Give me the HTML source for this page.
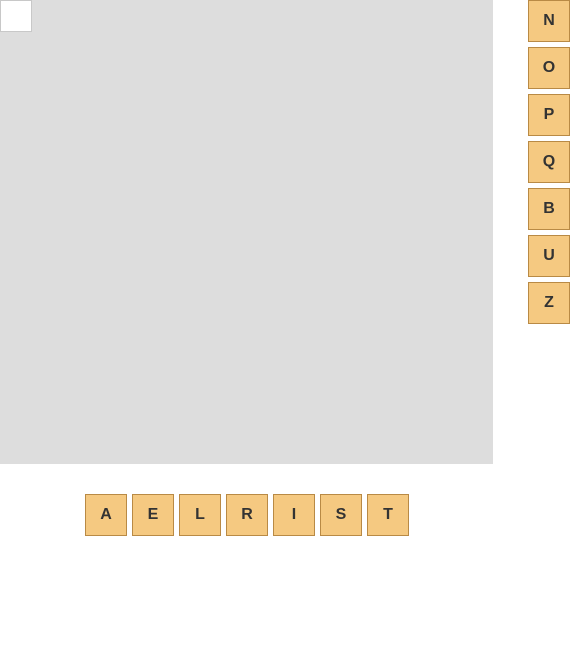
<!DOCTYPE html>
<html><head><style>
body{margin:0;width:584px;height:653px;background:#fff;position:relative;overflow:hidden;font-family:"Liberation Sans",Arial,sans-serif}
#board{position:absolute;left:0;top:0;width:493px;height:464px;background:#dddddd}
#cell{position:absolute;left:0;top:0;width:30px;height:30px;background:#fff;border:1px solid #c8c8c8}
.t{position:absolute;width:40px;height:40px;background:#f5c981;border:1px solid #b98a45;color:#333;font-weight:bold;font-size:16px;line-height:40px;text-align:center}
</style></head><body>
<div id="board"><div id="cell"></div></div>
<div class="t" style="left:528px;top:0">N</div>
<div class="t" style="left:528px;top:47px">O</div>
<div class="t" style="left:528px;top:94px">P</div>
<div class="t" style="left:528px;top:141px">Q</div>
<div class="t" style="left:528px;top:188px">B</div>
<div class="t" style="left:528px;top:235px">U</div>
<div class="t" style="left:528px;top:282px">Z</div>
<div class="t" style="left:85px;top:494px">A</div>
<div class="t" style="left:132px;top:494px">E</div>
<div class="t" style="left:179px;top:494px">L</div>
<div class="t" style="left:226px;top:494px">R</div>
<div class="t" style="left:273px;top:494px">I</div>
<div class="t" style="left:320px;top:494px">S</div>
<div class="t" style="left:367px;top:494px">T</div>
</body></html>
